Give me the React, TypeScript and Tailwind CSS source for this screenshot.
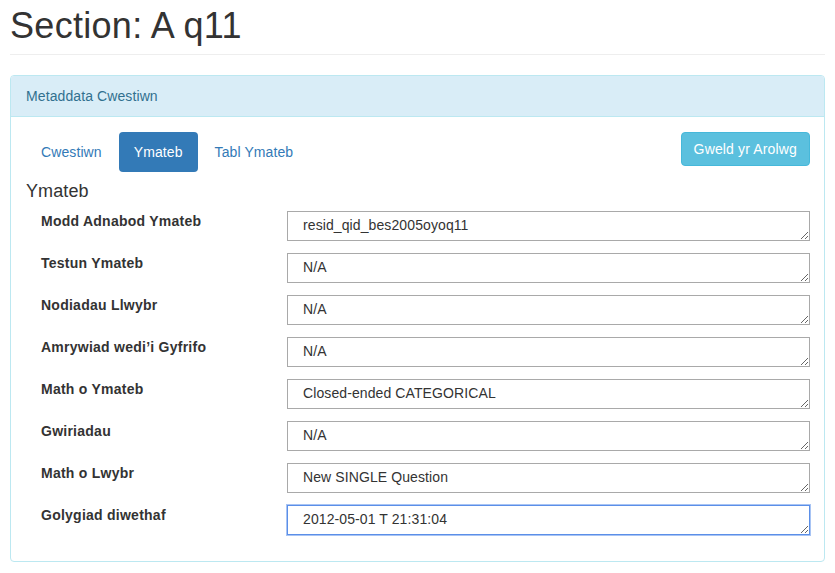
import React from "react";

const rows: [string, string][] = [
  ["Modd Adnabod Ymateb", "resid_qid_bes2005oyoq11"],
  ["Testun Ymateb", "N/A"],
  ["Nodiadau Llwybr", "N/A"],
  ["Amrywiad wedi’i Gyfrifo", "N/A"],
  ["Math o Ymateb", "Closed-ended CATEGORICAL"],
  ["Gwiriadau", "N/A"],
  ["Math o Lwybr", "New SINGLE Question"],
  ["Golygiad diwethaf", "2012-05-01 T 21:31:04"],
];

export default function App() {
  return (
    <div
      className="w-[835px] h-[573px] overflow-hidden bg-white px-[10px] text-[14px] leading-[20px] text-[#333] tracking-[0.1px]"
      style={{ fontFamily: '"Liberation Sans", Arial, Helvetica, sans-serif' }}
    >
      <h1 className="mt-[6px] pb-[8px] border-b border-[#eee] text-[36px] leading-[40px] font-normal tracking-[0.3px]">
        Section: A q11
      </h1>
      <div className="mt-[20px] border border-[#bce8f1] rounded-[4px]">
        <div className="bg-[#d9edf7] border-b border-[#bce8f1] rounded-t-[3px] px-[15px] py-[10px] text-[#31708f]">
          Metaddata Cwestiwn
        </div>
        <div className="px-[15px] pt-[15px] pb-[14px]">
          <div className="flex items-start justify-between">
            <div className="flex">
              <span className="px-[15px] py-[10px] rounded-[4px] text-[#337ab7]">Cwestiwn</span>
              <span className="ml-[2px] px-[15px] py-[10px] rounded-[4px] bg-[#337ab7] text-white">Ymateb</span>
              <span className="ml-[2px] px-[15px] py-[10px] rounded-[4px] text-[#337ab7]">Tabl Ymateb</span>
            </div>
            <button className="mr-[-1px] px-[12px] py-[6px] border border-[#46b8da] bg-[#5bc0de] text-white rounded-[4px] leading-[20px] tracking-[0.15px]">
              Gweld yr Arolwg
            </button>
          </div>
          <h4 className="mt-[9px] mb-[10px] text-[18px] leading-[20px] font-normal">Ymateb</h4>
          <div className="flex flex-col">
            {rows.map(([label, value], i) => (
              <div key={label} className="grid grid-cols-[261px_1fr] mb-[12px] mr-[-1px]">
                <div className="pl-[15px] font-bold tracking-[0.25px]">{label}</div>
                <textarea
                  readOnly
                  defaultValue={value}
                  rows={1}
                  className={
                    i === rows.length - 1
                      ? "block w-full h-[30px] border border-[#5b8fe8] shadow-[0_0_0_1px_#a8c4f4] rounded-none outline-none pt-[3px] pb-0 px-[15px] text-[14px] leading-[20px] text-[#333] tracking-[0.1px]"
                      : "block w-full h-[30px] border border-[#a9a9a9] rounded-none outline-none pt-[3px] pb-0 px-[15px] text-[14px] leading-[20px] text-[#333] tracking-[0.1px]"
                  }
                  style={{ fontFamily: '"Liberation Sans", Arial, sans-serif' }}
                />
              </div>
            ))}
          </div>
        </div>
      </div>
    </div>
  );
}
